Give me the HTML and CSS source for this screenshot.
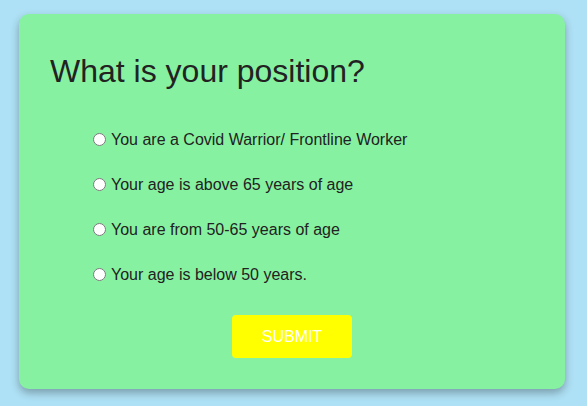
FILE: index.html
```html
<!DOCTYPE html>
<html>
<head>
<meta charset="utf-8">
<link rel="stylesheet" href="styles.css">
</head>
<body>
<div class="card">
  <h1 class="title">What is your position?</h1>
  <form class="options">
    <label class="opt"><input type="radio" name="p" class="radio"><span>You are a Covid Warrior/ Frontline Worker</span></label>
    <label class="opt"><input type="radio" name="p" class="radio"><span>Your age is above 65 years of age</span></label>
    <label class="opt"><input type="radio" name="p" class="radio"><span>You are from 50-65 years of age</span></label>
    <label class="opt"><input type="radio" name="p" class="radio"><span>Your age is below 50 years.</span></label>
    <div class="actions"><button type="button" class="submit">SUBMIT</button></div>
  </form>
</div>
</body>
</html>
```
FILE: styles.css
```css
html, body {
  margin: 0;
  padding: 0;
}
body {
  background: #aee1f5;
  width: 587px;
  height: 406px;
  padding: 14px 0 0 19px;
  box-sizing: border-box;
  font-family: "Liberation Sans", Arial, sans-serif;
  color: #222;
}
.card {
  width: 546px;
  height: 375px;
  background: #86f2a1;
  border-radius: 10px;
  box-shadow: 0 4px 8px rgba(0, 0, 0, 0.3);
  padding: 40px 0 0 31px;
  box-sizing: border-box;
}
.title {
  margin: 0;
  font-size: 32px;
  font-weight: normal;
  line-height: 34px;
  color: #222;
}
.options {
  margin: 29px 0 0 43px;
  display: flex;
  flex-direction: column;
}
.opt {
  display: flex;
  align-items: center;
  height: 45px;
  font-size: 16px;
  gap: 5px;
}
.radio {
  margin: 0;
  width: 13px;
  height: 13px;
}
.actions {
  margin-left: -43px;
  width: 484px;
  display: flex;
  justify-content: center;
  margin-top: 18px;
}
.submit {
  width: 120px;
  height: 43px;
  background: #ffff00;
  border: none;
  border-radius: 4px;
  color: #fff;
  font-family: "Liberation Sans", Arial, sans-serif;
  font-size: 16px;
}
```
